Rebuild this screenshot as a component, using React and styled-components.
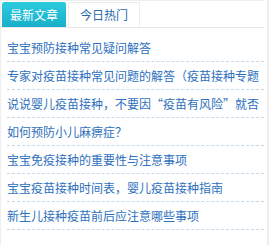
import styled, { createGlobalStyle } from "styled-components";

const GlobalStyle = createGlobalStyle`
  body {
    margin: 0;
    background: #fff;
    font-family: "Noto Sans CJK SC", "Noto Sans", sans-serif;
  }
`;

const Panel = styled.div`
  width: 266px;
  height: 245px;
  border-left: 1px solid #eeeeee;
  border-right: 2px solid #eeeeee;
`;

const TabBar = styled.div`
  display: flex;
  align-items: flex-end;
  height: 28px;
  margin-right: 3px;
  padding-left: 1px;
  border-top: 1px solid #eeeeee;
  border-bottom: 1px solid #e8e8e8;
  box-sizing: border-box;
`;

const Tab = styled.div`
  height: 25px;
  box-sizing: border-box;
  padding: 0 ${(p) => (p.$active ? 8 : 11)}px;
  margin-right: 2px;
  font-size: 12px;
  line-height: ${(p) => (p.$active ? 25 : 24)}px;
  border-radius: 2px 2px 0 0;
  color: ${(p) => (p.$active ? "#ffffff" : "#2a6aa8")};
  background: ${(p) =>
    p.$active ? "linear-gradient(#2ccbdf, #19afca)" : "#ffffff"};
  border: ${(p) => (p.$active ? "none" : "1px solid #ececec")};
  border-bottom: none;
`;

const List = styled.ul`
  list-style: none;
  margin: 0;
  padding: 6px 3px 0 6px;
`;

const Item = styled.li`
  height: 27px;
  line-height: 27px;
  border-bottom: 1px dashed #c4dbe9;
  font-size: 12px;
  white-space: nowrap;
  overflow: hidden;
  color: #2d70bd;
`;

// titles are cut to 21 characters, as the site does
const articles = [
  "宝宝预防接种常见疑问解答",
  "专家对疫苗接种常见问题的解答（疫苗接种专题",
  "说说婴儿疫苗接种，不要因“疫苗有风险”就否",
  "如何预防小儿麻痹症？",
  "宝宝免疫接种的重要性与注意事项",
  "宝宝疫苗接种时间表，婴儿疫苗接种指南",
  "新生儿接种疫苗前后应注意哪些事项",
];

export default function App() {
  return (
    <>
      <GlobalStyle />
      <Panel lang="zh-CN">
        <TabBar>
          <Tab $active>最新文章</Tab>
          <Tab>今日热门</Tab>
        </TabBar>
        <List>
          {articles.map((t) => (
            <Item key={t}>{t}</Item>
          ))}
        </List>
      </Panel>
    </>
  );
}
